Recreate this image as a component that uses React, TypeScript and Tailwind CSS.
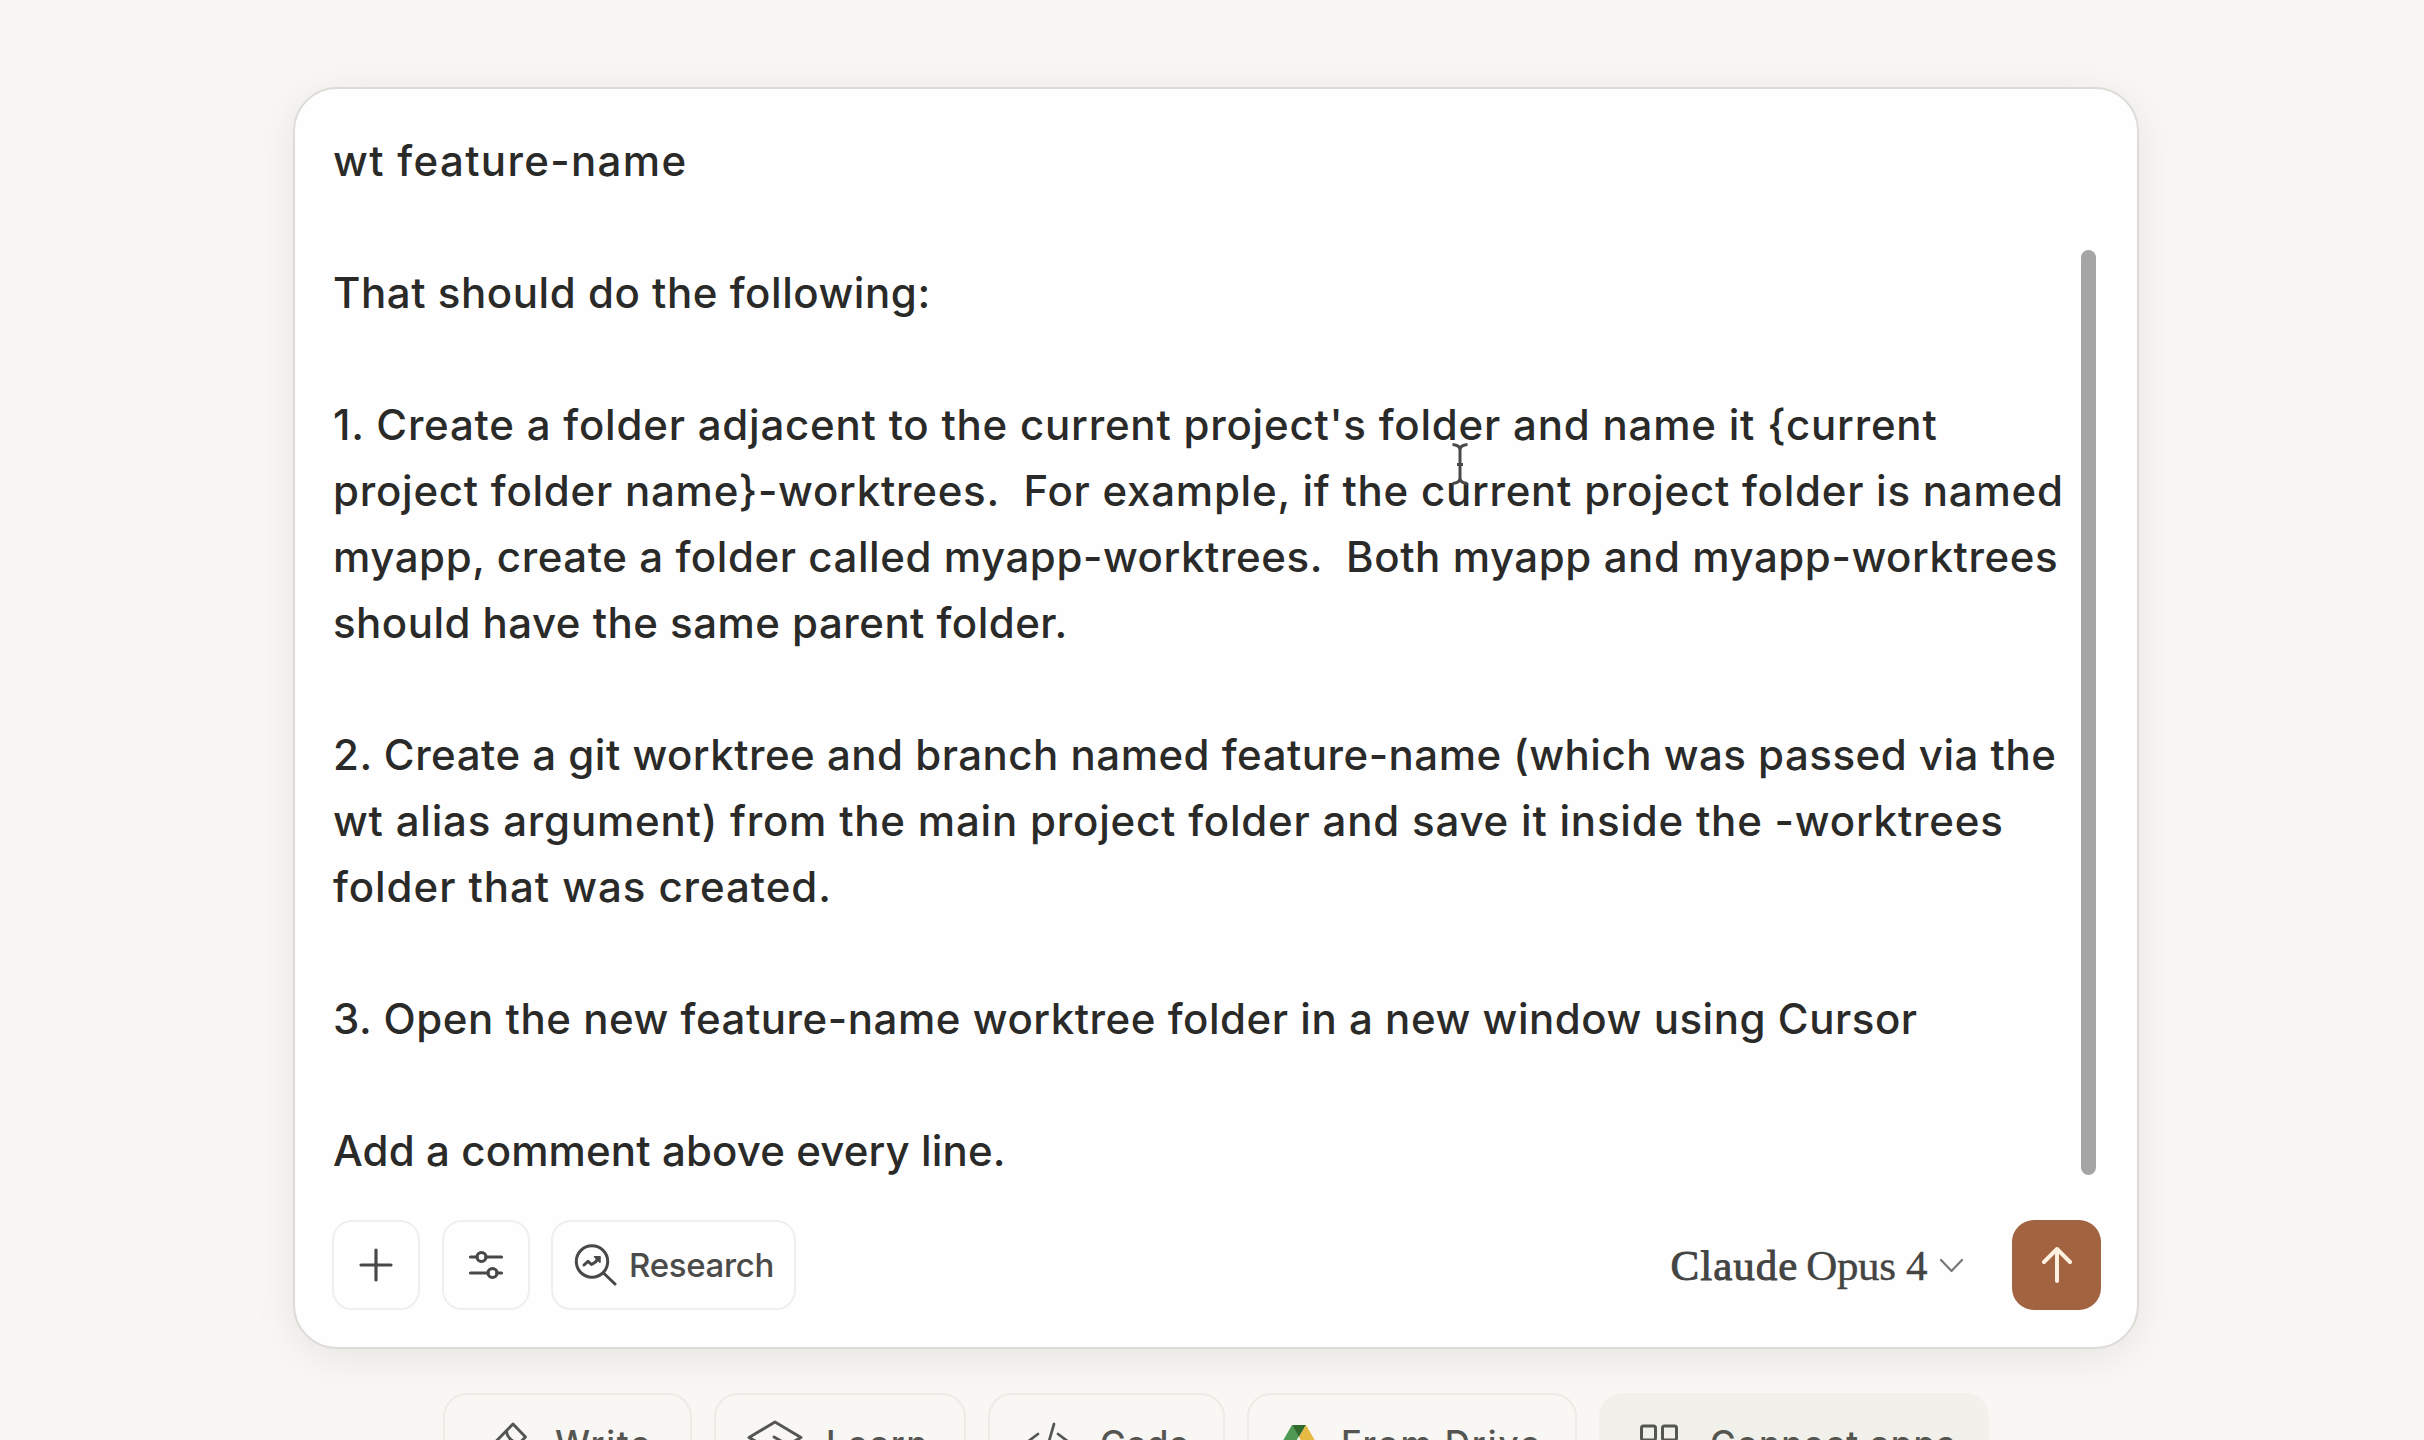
import React from 'react';

const lines: { text: string; spacing: string }[] = [
  { text: 'wt feature-name', spacing: 'tracking-[1.35px]' },
  { text: '', spacing: '' },
  { text: 'That should do the following:', spacing: 'tracking-[0.55px]' },
  { text: '', spacing: '' },
  { text: "1. Create a folder adjacent to the current project's folder and name it {current", spacing: 'tracking-[0.785px]' },
  { text: 'project folder name}-worktrees.  For example, if the current project folder is named', spacing: 'tracking-[0.76px]' },
  { text: 'myapp, create a folder called myapp-worktrees.  Both myapp and myapp-worktrees', spacing: 'tracking-[0.573px]' },
  { text: 'should have the same parent folder.', spacing: 'tracking-[0.48px]' },
  { text: '', spacing: '' },
  { text: '2. Create a git worktree and branch named feature-name (which was passed via the', spacing: 'tracking-[0.495px]' },
  { text: 'wt alias argument) from the main project folder and save it inside the -worktrees', spacing: 'tracking-[0.797px]' },
  { text: 'folder that was created.', spacing: 'tracking-[0.95px]' },
  { text: '', spacing: '' },
  { text: '3. Open the new feature-name worktree folder in a new window using Cursor', spacing: 'tracking-[0.54px]' },
  { text: '', spacing: '' },
  { text: 'Add a comment above every line.', spacing: 'tracking-[0.12px]' },
];

const stroke = { fill: 'none', stroke: 'currentColor', strokeLinecap: 'round', strokeLinejoin: 'round' } as const;

function PlusIcon() {
  return (
    <svg width="36" height="36" viewBox="0 0 36 36" {...stroke} strokeWidth="3.2">
      <path d="M18 3v30M3 18h30" />
    </svg>
  );
}

function SlidersIcon() {
  return (
    <svg width="36" height="36" viewBox="0 0 36 36" {...stroke} strokeWidth="3.2">
      <path d="M2.500 10H9M18 10h15.500M2.500 26H20M29 26h4.500" />
      <circle cx="13.500" cy="10" r="4.500" />
      <circle cx="24.500" cy="26" r="4.500" />
    </svg>
  );
}

function ResearchIcon() {
  return (
    <svg width="44" height="44" viewBox="0 0 44 44" {...stroke} strokeWidth="3">
      <circle cx="19" cy="18.500" r="15.700" />
      <path d="M30.500 30l11.500 11" />
      <path d="M11 22l4-3.700 3.500 3.200 4-2.500 3.500-4.500" />
      <path d="M21.500 13.800h5.500v5.500z" fill="currentColor" strokeWidth="1.500" />
    </svg>
  );
}

function PencilIcon() {
  return (
    <svg width="42" height="42" viewBox="0 0 42 42" {...stroke} strokeWidth="2.900">
      <path d="M27 2l12.500 13L15 39.500H2.500V27z" />
      <path d="M20.500 9.500q1 9 12.500 12" />
    </svg>
  );
}

function CapIcon() {
  return (
    <svg width="56" height="46" viewBox="0 0 56 46" {...stroke} strokeWidth="2.900">
      <path d="M28 2L54 17.500 28 32 2 17.500z" />
      <path d="M27 17l14 8v16M11 23v11q17 16 34 0V23" />
    </svg>
  );
}

function CodeIcon() {
  return (
    <svg width="50" height="42" viewBox="0 0 50 42" {...stroke} strokeWidth="2.700">
      <path d="M15 12L3 21l12 9M35 12l12 9-12 9M31 2L20 40" />
    </svg>
  );
}

function DriveIcon() {
  return (
    <svg width="44" height="40" viewBox="0 0 44 40">
      <path d="M15 2L0 28l7.500 11L22 13z" fill="#4f9a52" />
      <path d="M15 2h14l-7 12z" fill="#2f6b2c" />
      <path d="M29 2l15 26H30L22 14z" fill="#e6ba42" />
      <path d="M7.500 39L15 28h29l-7.500 11z" fill="#4a7fdc" />
    </svg>
  );
}

function GridIcon() {
  return (
    <svg width="40" height="40" viewBox="0 0 40 40" {...stroke} strokeWidth="3">
      <rect x="2.500" y="3" width="14" height="14" rx="2" />
      <rect x="23.500" y="3" width="14" height="14" rx="2" />
      <rect x="2.500" y="24" width="14" height="14" rx="2" />
      <rect x="23.500" y="24" width="14" height="14" rx="2" />
    </svg>
  );
}

function TextCursor() {
  return (
    <svg className="absolute left-[1118px] top-[315px]" width="18" height="42" viewBox="0 0 18 42" fill="none" stroke="#4a4a4a">
      <path d="M1.500 1.500Q9 2 9 7q0-5 7.500-5.500M9 6v30M1.500 40.500Q9 40 9 35q0 5 7.500 5.500" strokeWidth="3" />
      <path d="M6 21.500h6" strokeWidth="3" />
    </svg>
  );
}

export default function App() {
  return (
    <div className="flex h-[1440px] w-[2424px] flex-col overflow-hidden bg-[#f8f7f3] pt-[87px] font-['Inter',sans-serif]">
      <main className="ml-[293px] flex h-[1262px] w-[1846px] shrink-0 flex-col rounded-[44px] border-2 border-[#dcdbd8] bg-[#fefefe] shadow-[0_8px_44px_rgba(0,0,0,0.08)]">
        <div className="flex h-[1131px] justify-between pl-[38px] pr-[41px] pt-[39px]">
          <div className="relative text-[42px] font-[450] leading-[66px] text-[#2a2a29]">
            {lines.map((line, i) => (
              <p key={i} className={`h-[66px] whitespace-pre ${line.spacing}`}>{line.text}</p>
            ))}
            <TextCursor />
          </div>
          <div className="mt-[122px] h-[925px] w-[15px] shrink-0 rounded-full bg-[#a5a5a5]" />
        </div>
        <div className="flex h-[90px] items-center pl-[37px] pr-[36px] text-[#484847]">
          <button className="flex h-[90px] w-[88px] items-center justify-center rounded-[20px] border-2 border-[#efefee]"><PlusIcon /></button>
          <button className="ml-[22px] flex h-[90px] w-[88px] items-center justify-center rounded-[20px] border-2 border-[#efefee]"><SlidersIcon /></button>
          <button className="ml-[21px] flex h-[90px] w-[245px] items-center rounded-[20px] border-2 border-[#efefee] pl-5">
            <ResearchIcon />
            <span className="ml-[12px] pt-px text-[33px] font-medium tracking-[-0.3px] text-[#4b4b4a]">Research</span>
          </button>
          <button className="ml-auto flex items-baseline font-['Liberation_Serif',serif] text-[43px] leading-none text-[#444443]">
            <span className="tracking-[1px] [-webkit-text-stroke:0.9px_#444443]">Claude</span>
            <span className="ml-2 tracking-[-0.4px] [-webkit-text-stroke:0.4px_#444443]">Opus 4</span>
            <svg className="ml-[12px] mt-0.5 self-center" width="25" height="16" viewBox="0 0 25 16" {...stroke} stroke="#777776" strokeWidth="2.200">
              <path d="M2 2l10.500 11L23 2" />
            </svg>
          </button>
          <button className="ml-[48px] flex h-[90px] w-[89px] items-center justify-center rounded-[22px] bg-[#a26340] text-[#fff1df]">
            <svg width="36" height="40" viewBox="0 0 36 40" {...stroke} strokeWidth="4">
              <path d="M18 4v32M5 17L18 4l13 13" />
            </svg>
          </button>
        </div>
      </main>
      <div className="ml-[443px] mt-[44px] flex shrink-0 gap-[22px] text-[35px] font-medium text-[#555551]">
        <div className="flex h-[100px] w-[249px] items-center rounded-[24px] border-2 border-[#ecebe6] bg-[#f8f7f3] pl-[41px]">
          <PencilIcon /><span className="ml-[27px] tracking-[1.7px]">Write</span>
        </div>
        <div className="flex h-[100px] w-[252px] items-center rounded-[24px] border-2 border-[#ecebe6] bg-[#f8f7f3] pl-[31px]">
          <CapIcon /><span className="ml-[23px] tracking-[1.4px]">Learn</span>
        </div>
        <div className="flex h-[100px] w-[237px] items-center rounded-[24px] border-2 border-[#ecebe6] bg-[#f8f7f3] pl-[33px]">
          <CodeIcon /><span className="ml-[27px]">Code</span>
        </div>
        <div className="flex h-[100px] w-[330px] items-center rounded-[24px] border-2 border-[#ecebe6] bg-[#f8f7f3] pl-[28px]">
          <DriveIcon /><span className="ml-[20px] whitespace-nowrap tracking-[1.9px]">From Drive</span>
        </div>
        <div className="flex h-[100px] w-[390px] items-center rounded-[24px] bg-[#f1f0eb] pl-[40px]">
          <GridIcon /><span className="ml-[31px] whitespace-nowrap tracking-[1.1px]">Connect apps</span>
        </div>
      </div>
    </div>
  );
}
